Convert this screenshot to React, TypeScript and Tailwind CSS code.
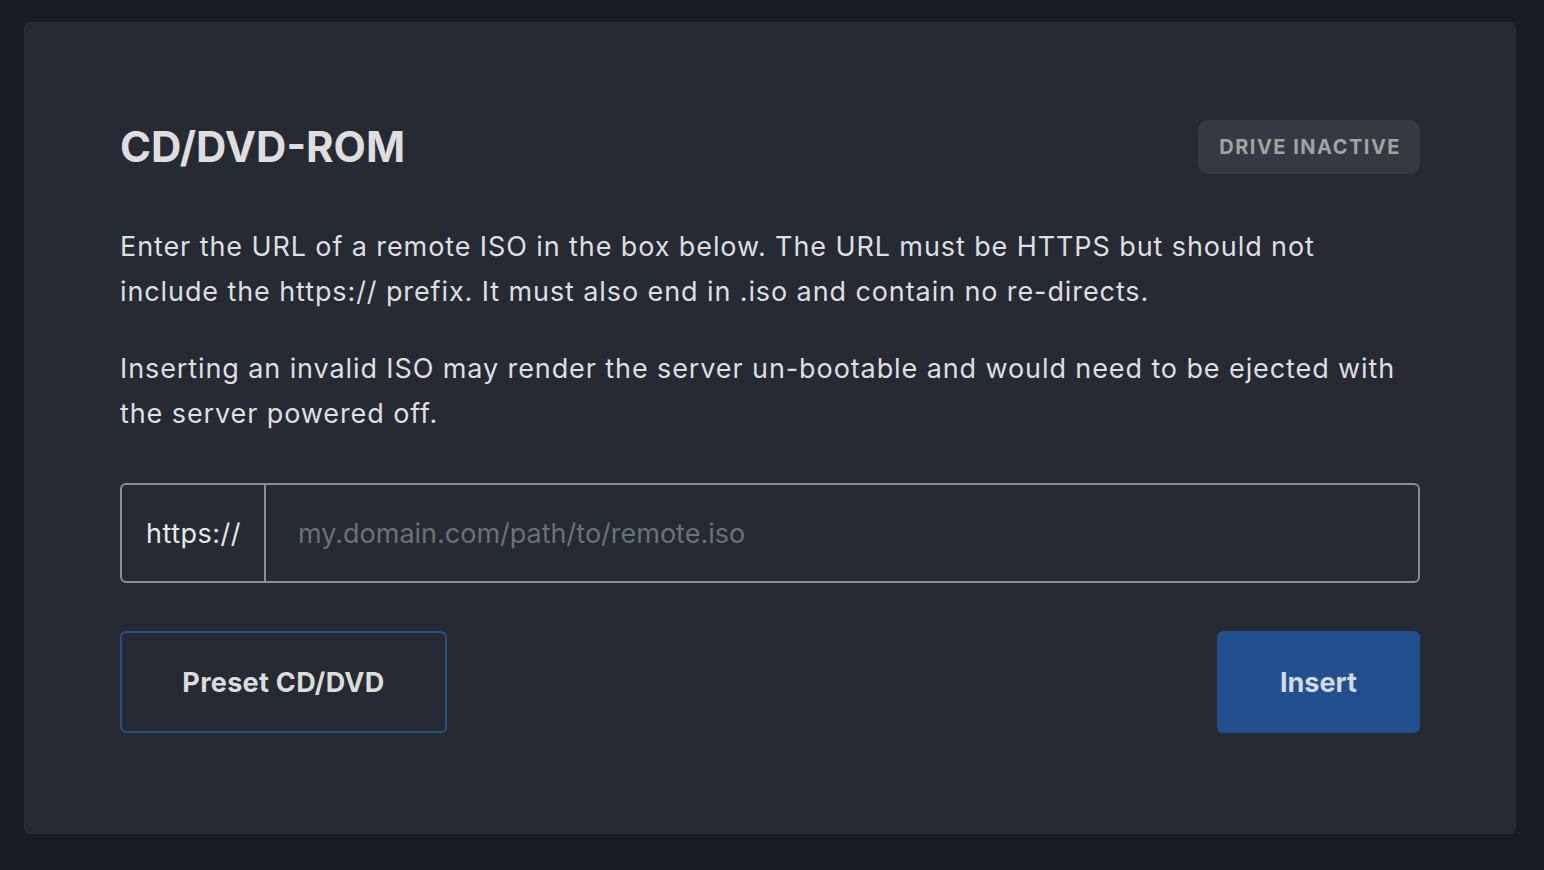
import React from "react";

export default function App() {
  return (
    <div className="min-h-[870px] w-full bg-[#181c23] pl-[24px] pt-[22px] pb-[37px]" style={{ fontFamily: "Inter, 'Noto Sans', sans-serif" }}>
      <div className="w-[1492px] rounded-[6px] bg-[#252a33] px-[96px] pt-[98px] pb-[101px]">
        <div className="flex h-[54px] items-center justify-between">
          <h1 className="text-[42px] font-bold leading-none tracking-[0px] text-[#dedede]">CD/DVD-ROM</h1>
          <div className="flex h-[54px] items-center rounded-[10px] bg-[#353a42] pl-[21px] pr-[19px] text-[20px] font-bold tracking-[1.5px] text-[#a2a2a2]">
            DRIVE INACTIVE
          </div>
        </div>
        <p className="mt-[50px] text-[27px] leading-[45px] tracking-[0.9px] text-[#dedfe1]">
          Enter the URL of a remote ISO in the box below. The URL must be HTTPS but should not
          <br />
          include the https:// prefix. It must also end in .iso and contain no re-directs.
        </p>
        <p className="mt-[32px] text-[27px] leading-[45px] tracking-[0.9px] text-[#dedfe1]">
          Inserting an invalid ISO may render the server un-bootable and would need to be ejected with
          <br />
          the server powered off.
        </p>
        <div className="mt-[47px] flex h-[100px] overflow-hidden rounded-[6px] border-2 border-[#8b8e93]">
          <div className="flex w-[144px] items-center border-r-2 border-[#8b8e93] pl-[24px] pt-[3px] text-[27px] tracking-[0.5px] text-[#e8e8e8]">
            https://
          </div>
          <input
            className="flex-1 bg-transparent pl-[32px] pt-[3px] text-[27px] text-[#e8e8e8] outline-none placeholder:text-[#6c7079]"
            placeholder="my.domain.com/path/to/remote.iso"
          />
        </div>
        <div className="mt-[48px] flex items-center justify-between">
          <button className="h-[102px] w-[327px] rounded-[6px] border-2 border-[#24528f] pt-[2px] text-[27px] font-bold tracking-[0.3px] text-[#dcdcdc]">
            Preset CD/DVD
          </button>
          <button className="h-[102px] w-[203px] rounded-[6px] bg-[#22508f] pt-[2px] text-[27px] font-bold text-[#d3d9e2]">
            Insert
          </button>
        </div>
      </div>
    </div>
  );
}
